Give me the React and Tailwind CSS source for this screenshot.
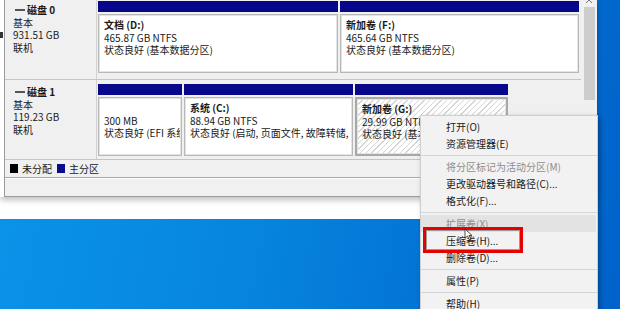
import React from "react";

const disks = [
  {
    name: "磁盘 0",
    info: ["基本", "931.51 GB", "联机"],
    top: "pt-[1px]",
    labelTop: "pt-[4px]",
    parts: [
      { w: "w-[240px]", title: "文档 (D:)", lines: ["465.87 GB NTFS", "状态良好 (基本数据分区)"] },
      { w: "flex-1", title: "新加卷 (F:)", lines: ["465.64 GB NTFS", "状态良好 (基本数据分区)"] },
    ],
  },
  {
    name: "磁盘 1",
    info: ["基本", "119.23 GB", "联机"],
    top: "pt-[4px]",
    labelTop: "pt-[6px]",
    parts: [
      { w: "w-[84px]", title: "", lines: ["300 MB", "状态良好 (EFI 系统分区)"] },
      { w: "w-[169px]", title: "系统 (C:)", lines: ["88.94 GB NTFS", "状态良好 (启动, 页面文件, 故障转储, 基本数据分区)"] },
      { w: "w-[153px]", title: "新加卷 (G:)", lines: ["29.99 GB NTFS", "状态良好 (基本数据分区)"], selected: true },
    ],
  },
];

const menu = [
  { label: "打开(O)" },
  { label: "资源管理器(E)" },
  { sep: true },
  { label: "将分区标记为活动分区(M)", disabled: true },
  { label: "更改驱动器号和路径(C)..." },
  { label: "格式化(F)..." },
  { sep: true },
  { label: "扩展卷(X)", disabled: true, hover: true },
  { label: "压缩卷(H)..." },
  { label: "删除卷(D)..." },
  { sep: true },
  { label: "属性(P)" },
  { sep: true },
  { label: "帮助(H)" },
];

function Partition({ part }) {
  return (
    <div className={`${part.w} flex flex-col shrink-0`}>
      <div className="h-[11px] bg-[#07078a]" />
      <div
        className={
          part.selected
            ? "mt-[2px] h-[59px] border-2 border-[#a8a8a8] bg-[repeating-linear-gradient(135deg,#d6d6d6_0px,#d6d6d6_1px,#ffffff_1px,#ffffff_4px)] overflow-hidden"
            : "mt-[2px] h-[59px] border border-[#b8b8b8] bg-white overflow-hidden"
        }
      >
        <div className="h-full border border-[#e4e4e4] pl-[4px] pt-[3px] leading-[12.5px] whitespace-nowrap overflow-hidden">
          <div className="font-bold h-[12.5px]">{part.title}</div>
          {part.lines.map((l) => (
            <div key={l}>{l}</div>
          ))}
        </div>
      </div>
    </div>
  );
}

function DiskRow({ disk }) {
  return (
    <div className="flex h-[80px] border-b border-[#c4c4c4]">
      <div className={`w-[92px] shrink-0 border-r border-[#d2d2d2] ${disk.labelTop} pl-[8px] leading-[12.5px]`}>
        <div className="flex items-center gap-[2px] font-bold">
          <span className="ml-[2px] w-[10px] h-[2px] bg-[#555]" />
          <span>{disk.name}</span>
        </div>
        {disk.info.map((t) => (
          <div key={t}>{t}</div>
        ))}
      </div>
      <div className={`flex-1 flex gap-[2px] pl-[1px] pr-[2px] ${disk.top}`}>
        {disk.parts.map((p, i) => (
          <Partition key={i} part={p} />
        ))}
      </div>
    </div>
  );
}

export default function App() {
  return (
    <div className="relative w-[620px] h-[309px] overflow-hidden flex bg-[linear-gradient(100deg,#0b95ea_0%,#0684de_45%,#0062ca_100%)] font-['Noto_Sans_CJK_SC',sans-serif] text-[10px] text-[#1a1a1a]">
      <div className="w-[597px] h-[219px] bg-white flex flex-col">
        <div className="h-[197px] flex shadow-[0_3px_6px_rgba(0,0,0,0.25)]">
          <div className="w-[4px] bg-white flex flex-col">
            <span className="mt-[32px] w-[3px] h-[6px] bg-[#333]" />
          </div>
          <div className="flex-1 flex flex-col bg-[#f0f0f0] border-l border-b border-[#9a9a9a]">
            <div className="flex h-[160px]">
              <div className="flex-1 flex flex-col">
                {disks.map((d) => (
                  <DiskRow key={d.name} disk={d} />
                ))}
              </div>
              <div className="w-[16px] flex flex-col items-center bg-[#f0f0f0]">
                <svg width="8" height="5" viewBox="0 0 8 5" className="mt-[-1px]">
                  <path d="M1 4 L4 1 L7 4" stroke="#777" fill="none" strokeWidth="1" />
                </svg>
                <div className="mt-[3px] w-[11px] h-[93px] bg-[#cdcdcd]" />
              </div>
            </div>
            <div className="h-[18px] flex items-center gap-[4px] pl-[5px] border-b border-[#a8a8a8]">
              <span className="w-[8px] h-[9px] bg-black" />
              <span>未分配</span>
              <span className="ml-[1px] w-[8px] h-[9px] bg-[#0a0a8c]" />
              <span>主分区</span>
            </div>
            <div className="flex-1 border-t border-white" />
          </div>
        </div>
      </div>

      <div className="absolute left-[420px] top-[115px] w-[178px] h-[200px] bg-[#f2f2f2] border border-[#cfcfcf] shadow-[2px_2px_5px_rgba(0,0,0,0.3)] pt-[2px]">
        {menu.map((m, i) =>
          m.sep ? (
            <div key={i} className="h-[6px] flex items-center">
              <div className="w-full h-px bg-[#d6d6d6]" />
            </div>
          ) : (
            <div
              key={i}
              className={`h-[17px] flex items-center pl-[25px] mr-[1px] ${m.hover ? "bg-[#e3e3e3]" : ""} ${m.disabled ? "text-[#8e8e8e]" : "text-[#1a1a1a]"}`}
            >
              {m.label}
            </div>
          )
        )}
      </div>

      <div className="absolute left-[423px] top-[227px] w-[100px] h-[26px] border-[3px] border-[#e60000]">
        <div className="w-full h-full border border-[#9a9a9a]" />
      </div>

      <svg className="absolute left-[464px] top-[228px]" width="9" height="13" viewBox="0 0 9 13">
        <path d="M1 1 L1 10 L3.5 8 L5.5 12 L7 11.3 L5 7.5 L8 7.5 Z" fill="#fff" stroke="#222" strokeWidth="0.8" />
      </svg>
    </div>
  );
}
